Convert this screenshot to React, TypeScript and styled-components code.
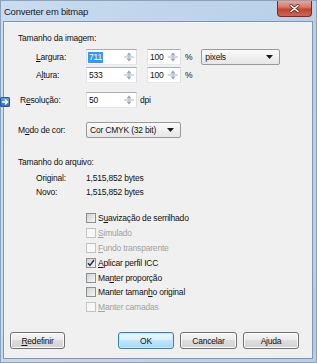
import React from "react";
import styled, { createGlobalStyle } from "styled-components";

const GlobalStyle = createGlobalStyle`
  html, body { margin: 0; padding: 0; }
  body {
    background: #b3cae3;
    font-family: "Liberation Sans", Arial, sans-serif;
  }
`;

const Window = styled.div`
  width: 317px;
  height: 363px;
  display: flex;
  flex-direction: column;
  overflow: hidden;
  background: linear-gradient(100deg, #c9dcf0 0%, #c0d5eb 45%, #b6cde6 100%);
  box-shadow: inset 0 0 0 1px #8aa2bc;
  color: #111;
  font-size: 8.5px;
  letter-spacing: -0.2px;
`;

const TitleBar = styled.div`
  height: 21px;
  display: flex;
  align-items: flex-start;
  padding-left: 4px;
  flex: none;
`;

const Title = styled.span`
  margin-top: 6px;
  line-height: 12px;
  font-size: 9.5px;
  letter-spacing: -0.25px;
  color: #1b1b1b;
`;

const CloseButton = styled.div`
  width: 35px;
  height: 16px;
  margin: 1px 5px 0 auto;
  box-sizing: border-box;
  border: 1px solid #7a2b22;
  border-top: none;
  border-radius: 0 0 4px 4px;
  background: linear-gradient(180deg, #e8a597 0%, #d77a69 40%, #c3432f 55%, #cf6656 100%);
  display: flex;
  align-items: center;
  justify-content: center;
`;

const Body = styled.div`
  flex: 1;
  display: flex;
  padding: 0 4px 4px 3px;
`;

const Client = styled.div`
  flex: 1;
  display: flex;
  flex-direction: column;
  background: #f0f0f0;
  border: 1px solid #8297ae;
`;

const Content = styled.div`
  padding: 10px 0 0 14px;
  display: flex;
  flex-direction: column;
`;

const TextRow = styled.div<{ $top?: number; $disabled?: boolean }>`
  display: flex;
  align-items: center;
  height: 12px;
  line-height: 12px;
  margin-top: ${(p) => p.$top ?? 0}px;
  color: ${(p) => (p.$disabled ? "#a2a2a2" : "inherit")};
`;

const Row = styled.div<{ $top: number }>`
  display: flex;
  align-items: center;
  height: 16px;
  margin-top: ${(p) => p.$top}px;
  position: relative;
`;

const Label = styled.span<{ $indent?: number }>`
  width: 68px;
  flex: none;
  box-sizing: border-box;
  padding-left: ${(p) => p.$indent ?? 0}px;
`;

const U = styled.span`
  text-decoration: underline;
  text-underline-offset: 1px;
`;

const Field = styled.div<{ $w: number; $gap?: number }>`
  width: ${(p) => p.$w}px;
  height: 16px;
  margin-left: ${(p) => p.$gap ?? 0}px;
  flex: none;
  box-sizing: border-box;
  background: #fff;
  border: 1px solid;
  border-color: #abadb3 #dbdfe6 #e3e9ef #e2e3ea;
  display: flex;
  align-items: center;
  padding-left: 1px;
`;

const FieldText = styled.span<{ $selected?: boolean }>`
  padding: 0 1px;
  line-height: 11px;
  background: ${(p) => (p.$selected ? "#3399ff" : "transparent")};
  color: ${(p) => (p.$selected ? "#fff" : "inherit")};
`;

const SpinIcon = styled.svg`
  margin-left: auto;
  margin-right: 1px;
  flex: none;
`;

const Unit = styled.span<{ $gap: number }>`
  margin-left: ${(p) => p.$gap}px;
`;

const Select = styled.div<{ $w: number; $gap?: number }>`
  width: ${(p) => p.$w}px;
  height: 16px;
  margin-left: ${(p) => p.$gap ?? 0}px;
  flex: none;
  box-sizing: border-box;
  border: 1px solid #9a9a9a;
  border-radius: 2px;
  background: linear-gradient(180deg, #fbfbfb 0%, #f0f0f0 50%, #e6e6e6 100%);
  display: flex;
  align-items: center;
  padding: 0 6px 0 3px;
  & > svg {
    margin-left: auto;
  }
`;

const ArrowBadge = styled.div`
  position: absolute;
  left: -18px;
  top: 5px;
  width: 10px;
  height: 10px;
  border-radius: 2px;
  background: linear-gradient(180deg, #6ea6e8 0%, #2f6cc4 100%);
  box-shadow: inset 0 0 0 1px #24579e;
  display: flex;
  align-items: center;
  justify-content: center;
`;

const CheckList = styled.div`
  margin-top: 13px;
  display: flex;
  flex-direction: column;
`;

const CheckRow = styled.div<{ $disabled?: boolean }>`
  height: 14.8px;
  display: flex;
  align-items: center;
  padding-left: 68px;
  color: ${(p) => (p.$disabled ? "#a2a2a2" : "inherit")};
`;

const Box = styled.span<{ $disabled?: boolean }>`
  width: 10px;
  height: 10px;
  flex: none;
  box-sizing: border-box;
  margin-right: 2px;
  border: 1px solid ${(p) => (p.$disabled ? "#c4c4c4" : "#8e8f8f")};
  background: ${(p) =>
    p.$disabled ? "#f7f7f7" : "linear-gradient(135deg, #cfd2d6 0%, #e6e7e9 60%, #f6f6f6 100%)"};
  display: flex;
  align-items: center;
  justify-content: center;
`;

const ButtonBar = styled.div`
  margin-top: auto;
  padding: 0 13px 9px 6px;
  display: flex;
  gap: 6px;
`;

const Button = styled.div<{ $w: number; $primary?: boolean; $push?: boolean }>`
  width: ${(p) => p.$w}px;
  height: 17px;
  box-sizing: border-box;
  margin-left: ${(p) => (p.$push ? "auto" : "0")};
  border: 1px solid ${(p) => (p.$primary ? "#3c7fb1" : "#707070")};
  border-radius: 3px;
  background: ${(p) =>
    p.$primary
      ? "linear-gradient(180deg, #eaf6fd 0%, #d9f0fc 50%, #bee6fd 50%, #a7d9f5 100%)"
      : "linear-gradient(180deg, #f4f4f4 0%, #ebebeb 50%, #dddddd 50%, #d2d2d2 100%)"};
  box-shadow: inset 0 0 0 1px ${(p) => (p.$primary ? "#c5e8f9" : "#fbfbfb")};
  display: flex;
  align-items: center;
  justify-content: center;
`;

const Spin = () => (
  <SpinIcon width="12" height="12" viewBox="0 0 12 12">
    <path d="M6 1.5 L3.5 4.5 H8.5 Z" fill="#95a4b6" />
    <path d="M1 6 H11" stroke="#a9b5c4" strokeWidth="1" />
    <path d="M6 4.5 V7.5" stroke="#a9b5c4" strokeWidth="1" />
    <path d="M3.5 7.5 H8.5 L6 10.5 Z" fill="#95a4b6" />
  </SpinIcon>
);

const DropArrow = () => (
  <svg width="7" height="4" viewBox="0 0 7 4">
    <path d="M0 0 H7 L3.5 4 Z" fill="#1a1a1a" />
  </svg>
);

const Check: React.FC<{ label: React.ReactNode; checked?: boolean; disabled?: boolean }> = ({
  label,
  checked,
  disabled,
}) => (
  <CheckRow $disabled={disabled}>
    <Box $disabled={disabled}>
      {checked && (
        <svg width="8" height="8" viewBox="0 0 8 8">
          <path d="M1 4.2 L3 6.5 L7 1" fill="none" stroke="#1e2e4a" strokeWidth="1.4" />
        </svg>
      )}
    </Box>
    <span>{label}</span>
  </CheckRow>
);

const App: React.FC = () => {
  return (
    <>
      <GlobalStyle />
      <Window>
        <TitleBar>
          <Title>Converter em bitmap</Title>
          <CloseButton>
            <svg width="11" height="9" viewBox="0 0 11 9">
              <path d="M2 1.5 L9 7.5 M9 1.5 L2 7.5" stroke="#6b2a22" strokeWidth="3" strokeLinecap="round" />
              <path d="M2 1.5 L9 7.5 M9 1.5 L2 7.5" stroke="#fff" strokeWidth="1.6" strokeLinecap="round" />
            </svg>
          </CloseButton>
        </TitleBar>
        <Body>
          <Client>
            <Content>
              <TextRow>Tamanho da imagem:</TextRow>
              <Row $top={5}>
                <Label $indent={18}>
                  <U>L</U>argura:
                </Label>
                <Field $w={51}>
                  <FieldText $selected>711</FieldText>
                  <Spin />
                </Field>
                <Field $w={34} $gap={10}>
                  <FieldText>100</FieldText>
                  <Spin />
                </Field>
                <Unit $gap={4}>%</Unit>
                <Select $w={79} $gap={9}>
                  <span>pixels</span>
                  <DropArrow />
                </Select>
              </Row>
              <Row $top={2}>
                <Label $indent={18}>
                  A<U>l</U>tura:
                </Label>
                <Field $w={51}>
                  <FieldText>533</FieldText>
                  <Spin />
                </Field>
                <Field $w={34} $gap={10}>
                  <FieldText>100</FieldText>
                  <Spin />
                </Field>
                <Unit $gap={4}>%</Unit>
              </Row>
              <Row $top={9}>
                <ArrowBadge>
                  <svg width="8" height="8" viewBox="0 0 8 8">
                    <path d="M1 4 H6 M4 1.5 L6.5 4 L4 6.5" fill="none" stroke="#fff" strokeWidth="1.5" />
                  </svg>
                </ArrowBadge>
                <Label $indent={2}>
                  R<U>e</U>solução:
                </Label>
                <Field $w={51}>
                  <FieldText>50</FieldText>
                  <Spin />
                </Field>
                <Unit $gap={3}>dpi</Unit>
              </Row>
              <Row $top={14}>
                <Label>
                  M<U>o</U>do de cor:
                </Label>
                <Select $w={95}>
                  <span>Cor CMYK (32 bit)</span>
                  <DropArrow />
                </Select>
              </Row>
              <TextRow $top={18}>Tamanho do arquivo:</TextRow>
              <TextRow $top={4}>
                <Label $indent={18}>Original:</Label>
                <span>1,515,852 bytes</span>
              </TextRow>
              <TextRow $top={2}>
                <Label $indent={18}>Novo:</Label>
                <span>1,515,852 bytes</span>
              </TextRow>
              <CheckList>
                <Check
                  label={
                    <>
                      S<U>u</U>avização de serrilhado
                    </>
                  }
                />
                <Check
                  disabled
                  label={
                    <>
                      <U>S</U>imulado
                    </>
                  }
                />
                <Check
                  disabled
                  label={
                    <>
                      <U>F</U>undo transparente
                    </>
                  }
                />
                <Check
                  checked
                  label={
                    <>
                      <U>A</U>plicar perfil ICC
                    </>
                  }
                />
                <Check
                  label={
                    <>
                      Ma<U>n</U>ter proporção
                    </>
                  }
                />
                <Check
                  label={
                    <>
                      Manter taman<U>h</U>o original
                    </>
                  }
                />
                <Check
                  disabled
                  label={
                    <>
                      <U>M</U>anter camadas
                    </>
                  }
                />
              </CheckList>
            </Content>
            <ButtonBar>
              <Button $w={55}>
                <span>
                  <U>R</U>edefinir
                </span>
              </Button>
              <Button $w={56} $primary $push>
                OK
              </Button>
              <Button $w={57}>Cancelar</Button>
              <Button $w={56}>Ajuda</Button>
            </ButtonBar>
          </Client>
        </Body>
      </Window>
    </>
  );
};

export default App;
